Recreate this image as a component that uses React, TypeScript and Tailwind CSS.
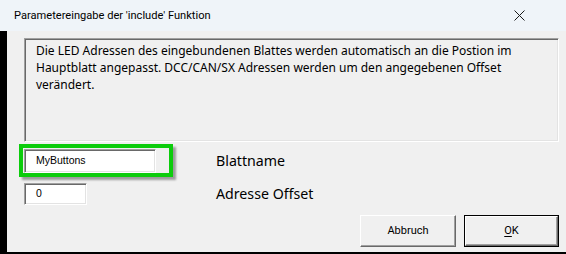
const sunken =
  "border border-t-[#a0a0a0] border-l-[#a0a0a0] border-r-white border-b-white shadow-[inset_1px_1px_0_#696969,inset_-1px_-1px_0_#e3e3e3]";

const raised =
  "border border-t-white border-l-white border-r-[#696969] border-b-[#696969] shadow-[inset_-1px_-1px_0_#a0a0a0]";

export default function App() {
  return (
    <div className="w-[566px] h-[254px] flex flex-col bg-[#f0f0f0] font-['Noto_Sans',sans-serif] text-black overflow-hidden">
      {/* title bar */}
      <div className="h-[31px] shrink-0 flex items-center justify-between bg-[#eff4f9] pl-[14px] pr-[41px]">
        <span className="text-[11.1px] leading-none font-['Roboto',sans-serif]">
          Parametereingabe der 'include' Funktion
        </span>
        <svg width="11" height="11" viewBox="0 0 11 11" className="text-[#1a1a1a]">
          <path d="M0.5 0.5 L10.5 10.5 M10.5 0.5 L0.5 10.5" stroke="currentColor" strokeWidth="1" />
        </svg>
      </div>

      {/* body */}
      <div className="flex-1 flex border-b-2 border-black">
        <div className="w-[7px] bg-black" />
        <div className="flex-1 flex flex-col pl-[17px] pr-[7px] pt-[7px]">
          <div className={`h-[104px] bg-[#f0f0f0] px-[11px] pt-[3px] text-[12px] leading-[17px] whitespace-nowrap ${sunken}`}>
            Die LED Adressen des eingebundenen Blattes werden automatisch an die Postion im
            <br />
            Hauptblatt angepasst. DCC/CAN/SX Adressen werden um den angegebenen Offset
            <br />
            verändert.
          </div>

          <div className="mt-[7px] grid grid-cols-[192px_1fr] gap-y-[10px] items-center">
            <div className="relative h-[24px]">
              <div className="absolute left-[-5px] top-[-5px] w-[154px] h-[33px] border-4 border-[#0ccc0c] shadow-[3px_3px_2px_rgba(0,0,0,0.35)]" />
              <div className={`relative w-[132px] h-[24px] bg-white flex items-center pl-[11px] text-[10.5px] font-['Liberation_Sans',sans-serif] ${sunken}`}>
                MyButtons
              </div>
            </div>
            <span className="text-[14.2px] leading-none">Blattname</span>

            <div className={`w-[63px] h-[22px] bg-white flex items-center pl-[11px] text-[10.5px] font-['Liberation_Sans',sans-serif] ${sunken}`}>
              0
            </div>
            <span className="text-[14.2px] leading-none">Adresse Offset</span>
          </div>

          <div className="mt-[10px] flex justify-end gap-[8px] font-['Roboto',sans-serif] text-[11px]">
            <button className={`w-[96px] h-[32px] bg-[#f0f0f0] ${raised}`}>Abbruch</button>
            <div className="w-[95px] h-[32px] border border-black">
              <button className={`w-full h-full bg-[#f0f0f0] ${raised}`}>
                <span className="underline underline-offset-2">O</span>K
              </button>
            </div>
          </div>
        </div>
      </div>
    </div>
  );
}
